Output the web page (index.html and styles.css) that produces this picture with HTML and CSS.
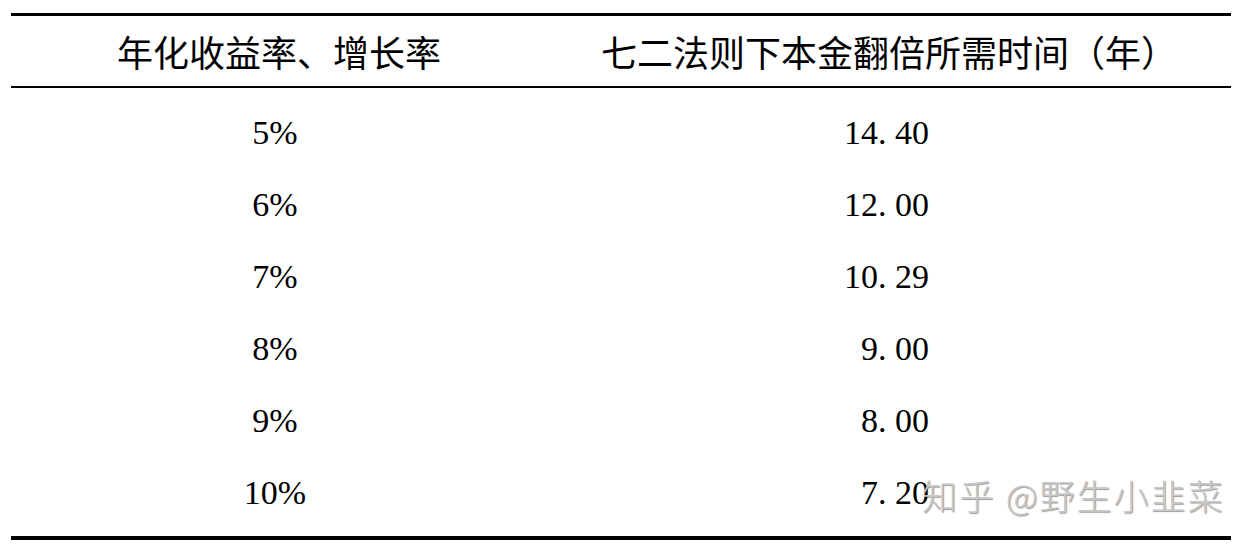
FILE: index.html
```html
<!DOCTYPE html>
<html lang="zh-CN">
<head>
<meta charset="utf-8">
<title>七二法则</title>
<link rel="stylesheet" href="styles.css">
</head>
<body>
<div class="page">
  <div class="table">
    <div class="head">
      <div class="hcell">年化收益率、增长率</div>
      <div class="hcell">七二法则下本金翻倍所需时间（年）</div>
    </div>
    <div class="body">
      <div class="row"><div class="rate">5%</div><div class="years">14. 40</div></div>
      <div class="row"><div class="rate">6%</div><div class="years">12. 00</div></div>
      <div class="row"><div class="rate">7%</div><div class="years">10. 29</div></div>
      <div class="row"><div class="rate">8%</div><div class="years">9. 00</div></div>
      <div class="row"><div class="rate">9%</div><div class="years">8. 00</div></div>
      <div class="row"><div class="rate">10%</div><div class="years">7. 20</div></div>
    </div>
  </div>
  <div class="watermark">知乎 @野生小韭菜</div>
</div>
</body>
</html>
```
FILE: styles.css
```css
html, body {
  margin: 0;
  padding: 0;
  background: #fff;
}
.page {
  position: relative;
  width: 1258px;
  height: 548px;
  overflow: hidden;
}
.table {
  margin: 13px 0 0 11px;
  width: 1220px;
  border-top: 3px solid #000;
  border-bottom: 4px solid #000;
}
.head {
  display: grid;
  grid-template-columns: 536px 1fr;
  height: 70px;
  border-bottom: 2px solid #000;
}
.hcell {
  font-family: "Noto Sans CJK SC", "Noto Sans", sans-serif;
  font-weight: 400;
  font-size: 36px;
  line-height: 70px;
  text-align: center;
  color: #000;
  white-space: nowrap;
}
.body {
  padding: 9px 0 7px;
}
.row {
  display: grid;
  grid-template-columns: 536px 1fr;
  height: 72px;
  font-family: "Liberation Serif", "Times New Roman", serif;
  font-size: 34px;
  line-height: 72px;
  color: #000;
}
.rate {
  text-align: center;
  padding-right: 8px;
}
.years {
  text-align: right;
  padding-right: 302px;
  white-space: pre;
}
.watermark {
  position: absolute;
  left: 922px;
  top: 475px;
  font-family: "Noto Sans CJK SC", "Noto Sans", sans-serif;
  font-weight: 300;
  font-size: 35px;
  line-height: 40px;
  letter-spacing: 2px;
  color: #c8c8c8;
  text-shadow: 1px 1px 1px rgba(0, 0, 0, 0.4);
  white-space: nowrap;
}
```
